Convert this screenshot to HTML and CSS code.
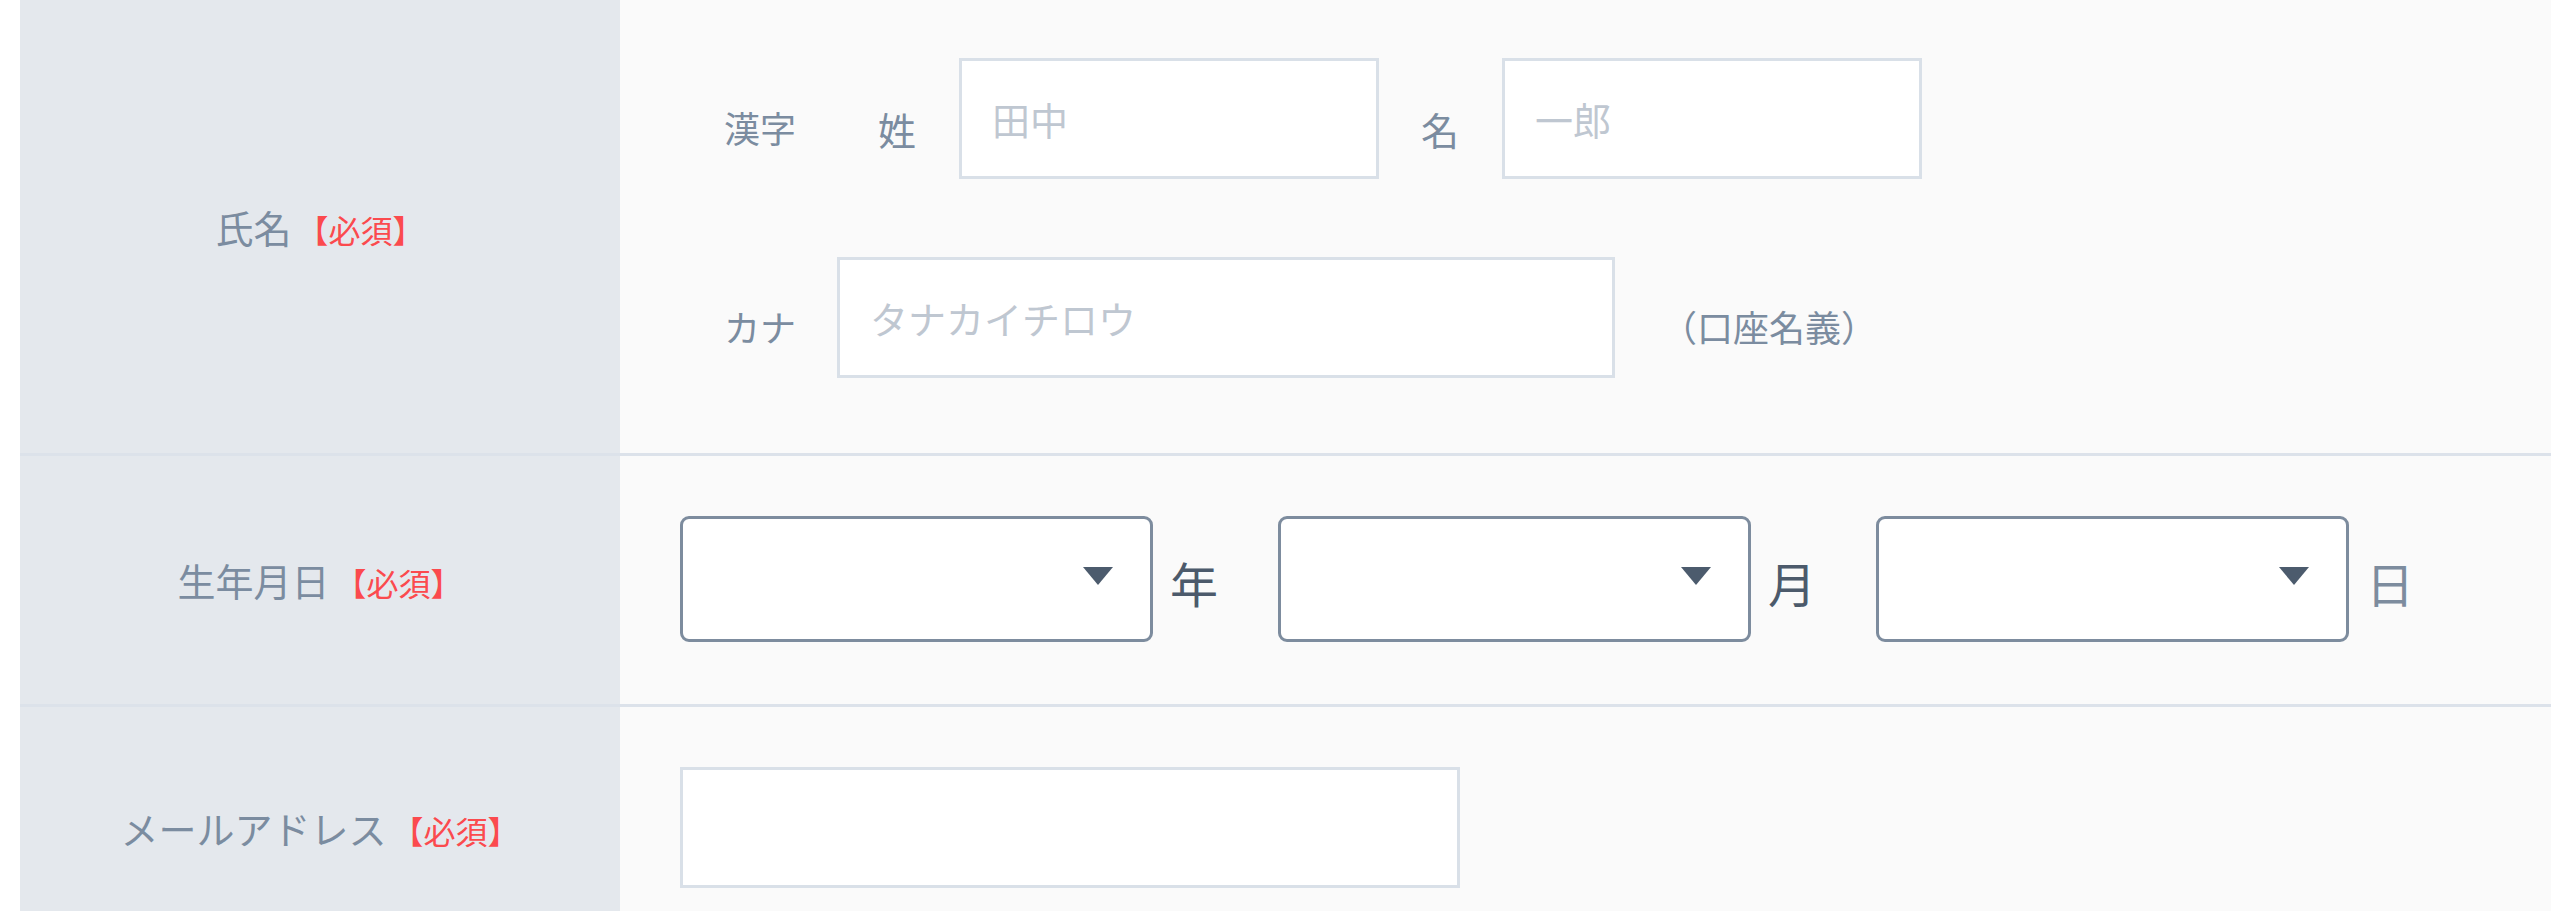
FILE: index.html
```html
<!DOCTYPE html>
<html lang="ja">
<head>
<meta charset="utf-8">
<title>お客様情報</title>
<link rel="stylesheet" href="styles.css">
</head>
<body>
<form class="form">
  <div class="row">
    <div class="label"><span class="label-text">氏名<span class="req">【必須】</span></span></div>
    <div class="content name-content">
      <div class="line">
        <span class="sub sub-kanji">漢字</span>
        <span class="part part-sei">姓</span>
        <input class="text name-input" type="text" placeholder="田中">
        <span class="part part-mei">名</span>
        <input class="text name-input" type="text" placeholder="一郎">
      </div>
      <div class="line">
        <span class="sub sub-kana">カナ</span>
        <input class="text kana-input" type="text" placeholder="タナカイチロウ">
        <span class="note">（口座名義）</span>
      </div>
    </div>
  </div>

  <div class="row">
    <div class="label"><span class="label-text">生年月日<span class="req">【必須】</span></span></div>
    <div class="content date-content">
      <div class="select-wrap">
        <select class="select"><option></option></select>
        <svg class="arrow" viewBox="0 0 30 18" width="30" height="18"><polygon points="0,0 30,0 15,18" fill="#4c5b6d"/></svg>
      </div>
      <span class="unit">年</span>
      <div class="select-wrap">
        <select class="select"><option></option></select>
        <svg class="arrow" viewBox="0 0 30 18" width="30" height="18"><polygon points="0,0 30,0 15,18" fill="#4c5b6d"/></svg>
      </div>
      <span class="unit">月</span>
      <div class="select-wrap">
        <select class="select"><option></option></select>
        <svg class="arrow" viewBox="0 0 30 18" width="30" height="18"><polygon points="0,0 30,0 15,18" fill="#4c5b6d"/></svg>
      </div>
      <span class="unit unit-last">日</span>
    </div>
  </div>

  <div class="row">
    <div class="label"><span class="label-text">メールアドレス<span class="req">【必須】</span></span></div>
    <div class="content mail-content">
      <input class="text mail-input" type="email">
    </div>
  </div>
</form>
</body>
</html>
```

FILE: styles.css
```css
html {
  overflow: hidden;
}

body {
  margin: 0 0 0 20px;
  background: #ffffff;
  font-family: "Noto Sans CJK JP", "Noto Sans", sans-serif;
  color: #7b8ca0;
}

.form {
  display: block;
}

.row {
  display: flex;
  border-bottom: 3px solid #dce2ea;
}

.label {
  width: 600px;
  flex-shrink: 0;
  background: #e4e8ed;
  display: flex;
  align-items: center;
  justify-content: center;
}

.label-text {
  font-size: 38px;
  line-height: 1;
  color: #7b8ca0;
}

.req {
  font-size: 32px;
  color: #fb4a4e;
  margin-left: 5px;
}

.content {
  flex: 1;
  background: #fafafa;
}

.name-content {
  padding: 58px 0 75px 104px;
  display: flex;
  flex-direction: column;
  gap: 78px;
}

.line {
  display: flex;
  align-items: center;
}

.sub {
  font-size: 36px;
  line-height: 1;
  padding-top: 17px;
  color: #7b8ca0;
}

.sub-kanji {
  margin-right: 82px;
}

.sub-kana {
  margin-right: 41px;
}

.part {
  font-size: 38px;
  line-height: 1;
  padding-top: 21px;
  color: #7b8ca0;
}

.part-sei {
  margin-right: 43px;
}

.part-mei {
  margin: 0 43px 0 42px;
}

.note {
  font-size: 36px;
  line-height: 1;
  padding-top: 17px;
  margin-left: 46px;
  color: #7b8ca0;
}

.text {
  box-sizing: border-box;
  height: 121px;
  border: 3px solid #d9e0e8;
  border-radius: 0;
  background: #ffffff;
  padding: 0 30px;
  margin: 0;
  font-family: "Noto Sans CJK JP", "Noto Sans", sans-serif;
  font-size: 38px;
  color: #4c5a6b;
  outline: none;
}

.text::placeholder {
  color: #bfc7d1;
}

.name-input {
  width: 420px;
}

.kana-input {
  width: 778px;
}

.date-content {
  padding: 60px 0 62px 60px;
  display: flex;
  align-items: center;
}

.select-wrap {
  position: relative;
  width: 473px;
  height: 126px;
  flex-shrink: 0;
}

.select {
  appearance: none;
  -webkit-appearance: none;
  box-sizing: border-box;
  width: 100%;
  height: 100%;
  margin: 0;
  border: 3px solid #7d8c9e;
  border-radius: 9px;
  background: #ffffff;
  font-family: "Noto Sans CJK JP", "Noto Sans", sans-serif;
  font-size: 38px;
  outline: none;
}

.arrow {
  position: absolute;
  right: 40px;
  top: 51px;
  pointer-events: none;
}

.unit {
  font-size: 48px;
  line-height: 1;
  padding-top: 5px;
  margin: 0 60px 0 17px;
  color: #4c5a6b;
}

.unit-last {
  margin-right: 0;
  color: #7d8c9e;
}

.mail-content {
  padding: 60px 0 60px 60px;
}

.mail-input {
  display: block;
  width: 780px;
}
```
